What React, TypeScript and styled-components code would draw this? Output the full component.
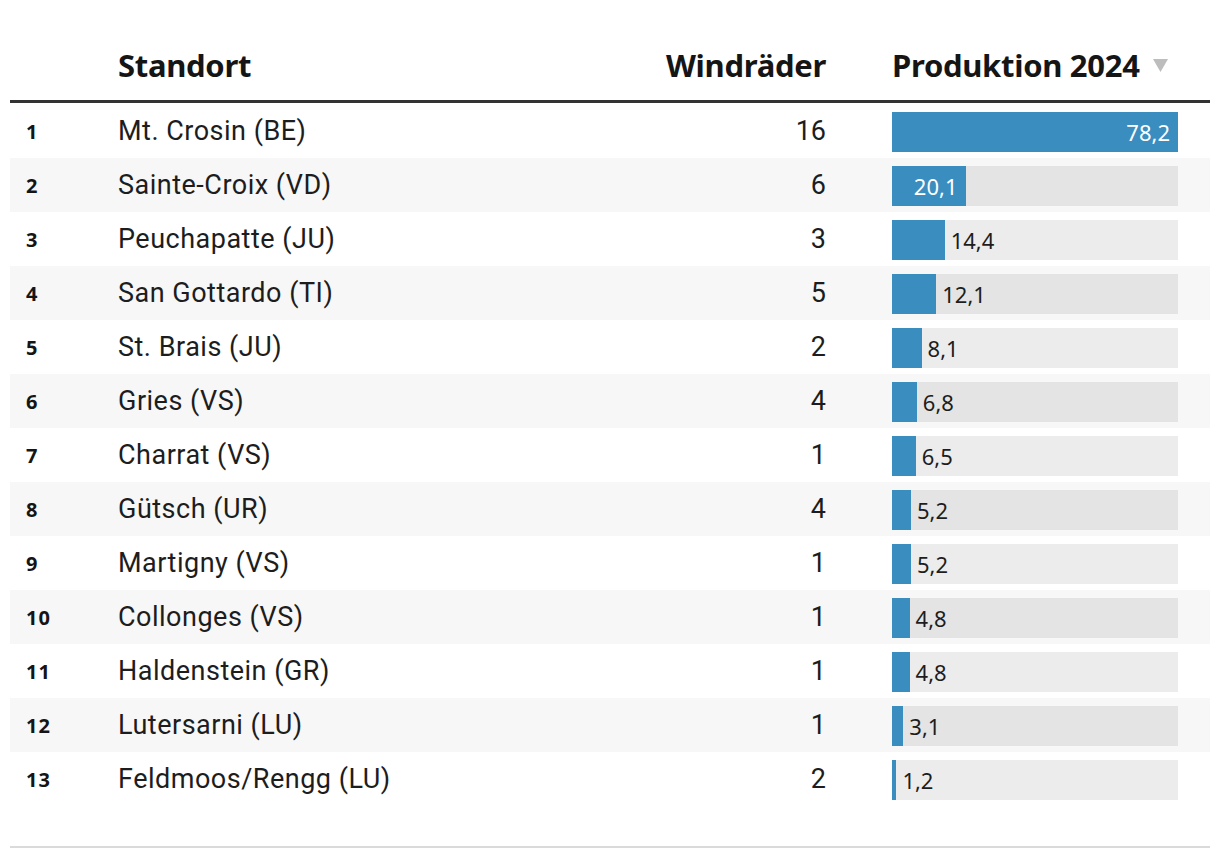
import styled, { createGlobalStyle } from "styled-components";

const GlobalStyle = createGlobalStyle`
  body {
    margin: 0;
    background: #ffffff;
    font-family: Roboto, "Noto Sans", sans-serif;
    color: #1d1d1d;
  }
`

const Wrapper = styled.div`
  padding: 30px 10px 0;
`

const Grid = `
  display: grid;
  grid-template-columns: 108px 1fr 180px 384px;
  align-items: center;
`

const HeadRow = styled.div`
  ${Grid}
  height: 70px;
  border-bottom: 3px solid #333333;
`

const HeadCell = styled.div<{ $align?: string; $pad?: number }>`
  font-family: "Noto Sans", Roboto, sans-serif;
  font-weight: 700;
  font-size: 31px;
  letter-spacing: -0.3px;
  color: #151515;
  padding-left: ${props => props.$pad || 0}px;
  display: flex;
  align-items: center;
  justify-content: ${props => props.$align === "right" ? "flex-end" : "flex-start"};
  gap: 13px;
`

const Body = styled.div`
  padding-top: 1px;
  border-bottom: 2px solid #dadada;
  padding-bottom: 40px;
`

const Row = styled.div<{ $odd: boolean }>`
  ${Grid}
  height: 54px;
  background: ${props => props.$odd ? "#f7f7f7" : "#ffffff"};
`

const Rank = styled.div`
  padding-left: 16px;
  font-family: "Noto Sans", Roboto, sans-serif;
  font-weight: 700;
  font-size: 20px;
  letter-spacing: 1px;
  color: #151515;
`

const Place = styled.div`
  font-size: 27px;
  letter-spacing: 0.5px;
  color: #1d1d1d;
`

const Count = styled.div`
  font-size: 27px;
  text-align: right;
  color: #1d1d1d;
`

const BarCell = styled.div`
  padding-left: 66px;
  padding-right: 32px;
`

const Track = styled.div`
  height: 40px;
  margin-top: 2px;
  background: rgba(0, 0, 0, 0.075);
  display: flex;
  align-items: center;
`

const Fill = styled.div`
  height: 100%;
  background: #3a8dbf;
  display: flex;
  align-items: center;
  justify-content: flex-end;
  flex-shrink: 0;
`

const Label = styled.span<{ $inside: boolean }>`
  font-family: "Noto Sans", "Open Sans", sans-serif;
  font-size: 22px;
  color: ${props => props.$inside ? "#ffffff" : "#1d1d1d"};
  padding: ${props => props.$inside ? "0 8px 0 0" : "0 0 0 6px"};
`

const rows = [
  { name: "Mt. Crosin (BE)", count: 16, value: 78.2 },
  { name: "Sainte-Croix (VD)", count: 6, value: 20.1 },
  { name: "Peuchapatte (JU)", count: 3, value: 14.4 },
  { name: "San Gottardo (TI)", count: 5, value: 12.1 },
  { name: "St. Brais (JU)", count: 2, value: 8.1 },
  { name: "Gries (VS)", count: 4, value: 6.8 },
  { name: "Charrat (VS)", count: 1, value: 6.5 },
  { name: "Gütsch (UR)", count: 4, value: 5.2 },
  { name: "Martigny (VS)", count: 1, value: 5.2 },
  { name: "Collonges (VS)", count: 1, value: 4.8 },
  { name: "Haldenstein (GR)", count: 1, value: 4.8 },
  { name: "Lutersarni (LU)", count: 1, value: 3.1 },
  { name: "Feldmoos/Rengg (LU)", count: 2, value: 1.2 },
]

const max = 78.2

function SortArrow() {
  return (
    <svg width="15" height="14" viewBox="0 0 15 14">
      <polygon points="0,1 15,1 7.5,14" fill="#bdbdbd" />
    </svg>
  )
}

export default function App() {
  return (
    <>
      <GlobalStyle />
      <Wrapper>
        <HeadRow>
          <div />
          <HeadCell>Standort</HeadCell>
          <HeadCell $align="right">Windräder</HeadCell>
          <HeadCell $pad={66}>Produktion 2024 <SortArrow /></HeadCell>
        </HeadRow>
        <Body>
          {rows.map((r, i) => {
            const inside = r.value > 18
            const label = r.value.toFixed(1).replace(".", ",")
            return (
              <Row key={r.name} $odd={i % 2 === 1}>
                <Rank>{i + 1}</Rank>
                <Place>{r.name}</Place>
                <Count>{r.count}</Count>
                <BarCell>
                  <Track>
                    <Fill style={{ width: `${(r.value / max) * 100}%` }}>
                      {inside && <Label $inside>{label}</Label>}
                    </Fill>
                    {!inside && <Label $inside={false}>{label}</Label>}
                  </Track>
                </BarCell>
              </Row>
            )
          })}
        </Body>
      </Wrapper>
    </>
  )
}
